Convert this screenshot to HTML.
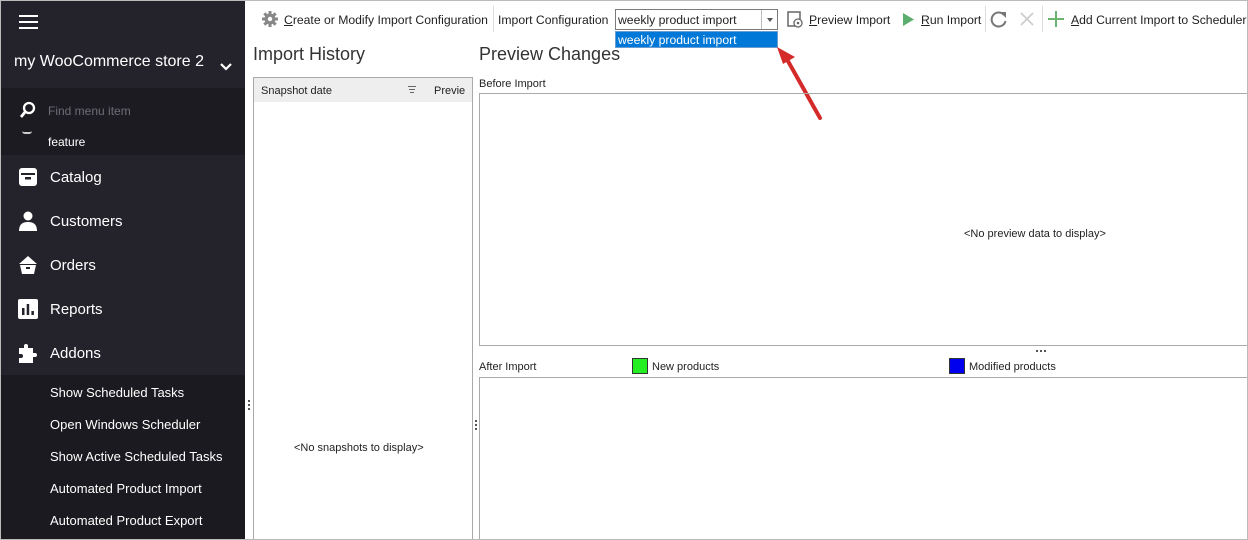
<!DOCTYPE html>
<html><head><meta charset="utf-8"><style>
*{box-sizing:border-box;margin:0;padding:0}
html{width:1248px;height:540px;overflow:hidden}
body{width:1248px;height:540px;overflow:hidden;background:#fff;font-family:"Liberation Sans",sans-serif;position:relative}
.a{position:absolute;white-space:nowrap}
.sb{position:absolute;left:0;top:0;width:245px;height:540px;background:#24232c}
.tb{font-size:12.2px;color:#222}
.u{text-decoration:underline}
.menu{color:#fff;font-size:15px}
.sub{color:#fff;font-size:13px}
.sm{font-size:11px;color:#222}
</style></head><body>
<div class="sb">
 <div class="a" style="left:0;top:88px;width:245px;height:67px;background:#1c1b21"></div>
 <div class="a" style="left:0;top:375px;width:245px;height:165px;background:#1b1a20"></div>
 <div class="a" style="left:19px;top:15px;width:19px;height:2px;background:#fff;box-shadow:0 6px 0 #fff,0 12px 0 #fff"></div>
 <div class="a" style="left:14px;top:53px;color:#fff;font-size:16px">my WooCommerce store 2</div>
 <svg class="a" style="left:219px;top:62px" width="14" height="10"><path d="M2 2l5 5 5-5" stroke="#fff" stroke-width="2.2" fill="none"/></svg>
 <svg class="a" style="left:19px;top:101px" width="18" height="18"><circle cx="10" cy="7" r="5" stroke="#fff" stroke-width="2.3" fill="none"/><path d="M6.5 10.5L2 16" stroke="#fff" stroke-width="2.8"/></svg>
 <div class="a" style="left:48px;top:104px;color:#6e6d75;font-size:12px">Find menu item</div>
 <div class="a" style="left:22px;top:131px;width:10px;height:3px;border-bottom:2px solid #ccc;border-radius:0 0 6px 6px"></div>
 <div class="a" style="left:48px;top:135px;color:#fff;font-size:12px">feature</div>
 <svg class="a" style="left:18px;top:167px" width="20" height="20"><rect x="1" y="1" width="18" height="18" rx="3" fill="#fff"/><rect x="3" y="6" width="14" height="2" fill="#24232c"/><rect x="7" y="10" width="6" height="2.5" fill="#24232c"/></svg>
 <div class="a menu" style="left:50px;top:169px">Catalog</div>
 <svg class="a" style="left:18px;top:211px" width="20" height="20"><circle cx="10" cy="5" r="4.5" fill="#fff"/><path d="M1 20c0-7 4-9 9-9s9 2 9 9z" fill="#fff"/></svg>
 <div class="a menu" style="left:50px;top:213px">Customers</div>
 <svg class="a" style="left:18px;top:255px" width="20" height="20"><path d="M10 1L1 9h18z" fill="#fff"/><path d="M2 10h16l-2 9H4z" fill="#fff"/><rect x="8" y="12" width="4" height="2" fill="#24232c"/></svg>
 <div class="a menu" style="left:50px;top:257px">Orders</div>
 <svg class="a" style="left:18px;top:299px" width="20" height="20"><rect x="0" y="0" width="20" height="20" rx="2" fill="#fff"/><rect x="4" y="9" width="2.5" height="7" fill="#24232c"/><rect x="8.7" y="5" width="2.5" height="11" fill="#24232c"/><rect x="13.4" y="12" width="2.5" height="4" fill="#24232c"/></svg>
 <div class="a menu" style="left:50px;top:301px">Reports</div>
 <svg class="a" style="left:18px;top:343px" width="20" height="20"><path d="M1 5h5V3a2 2 0 014 0v2h5v5h2a2 2 0 010 4h-2v6H1v-5h2a2 2 0 000-4H1z" fill="#fff"/></svg>
 <div class="a menu" style="left:50px;top:345px">Addons</div>
 <div class="a sub" style="left:50px;top:385px">Show Scheduled Tasks</div>
 <div class="a sub" style="left:50px;top:417px">Open Windows Scheduler</div>
 <div class="a sub" style="left:50px;top:449px">Show Active Scheduled Tasks</div>
 <div class="a sub" style="left:50px;top:481px">Automated Product Import</div>
 <div class="a sub" style="left:50px;top:513px">Automated Product Export</div>
</div>
<svg class="a" style="left:262px;top:11px" width="16" height="16"><circle cx="8" cy="8" r="5.5" fill="#888"/><g stroke="#888" stroke-width="3"><path d="M8 0v16M0 8h16M2.3 2.3l11.4 11.4M13.7 2.3L2.3 13.7"/></g><circle cx="8" cy="8" r="2.2" fill="#fff"/></svg>
<div class="a tb" style="left:284px;top:13px"><span class="u">C</span>reate or Modify Import Configuration</div>
<div class="a" style="left:493px;top:6px;width:1px;height:26px;background:#ddd"></div>
<div class="a tb" style="left:498px;top:13px">Import Configuration</div>
<div class="a" style="left:615px;top:9px;width:163px;height:21px;border:1px solid #7a7a7a;background:#fff"></div>
<div class="a tb" style="left:618px;top:13px">weekly product import</div>
<div class="a" style="left:761px;top:10px;width:1px;height:19px;background:#bbb"></div>
<div class="a" style="left:767px;top:18px;border:3.5px solid transparent;border-top:4px solid #555"></div>
<div class="a" style="left:615px;top:31px;width:163px;height:17px;background:#0078d7;border:1px solid #6a9cd0"></div>
<div class="a" style="left:618px;top:33px;color:#fff;font-size:12.2px">weekly product import</div>
<svg class="a" style="left:772px;top:44px" width="60" height="80"><path d="M48 74L12 10" stroke="#d42a2a" stroke-width="4" stroke-linecap="round"/><path d="M5 3l18 10-12 7z" fill="#d42a2a"/></svg>
<svg class="a" style="left:787px;top:11px" width="17" height="17"><rect x="1" y="1" width="12" height="14" fill="none" stroke="#666" stroke-width="1.5"/><circle cx="11" cy="12" r="4" fill="#fff" stroke="#666" stroke-width="1.3"/><circle cx="11" cy="12" r="1.3" fill="#666"/></svg>
<div class="a tb" style="left:809px;top:13px"><span class="u">P</span>review Import</div>
<svg class="a" style="left:902px;top:13px" width="12" height="13"><path d="M1 0l11 6.5L1 13z" fill="#5cae6e"/></svg>
<div class="a tb" style="left:921px;top:13px"><span class="u">R</span>un Import</div>
<div class="a" style="left:985px;top:6px;width:1px;height:26px;background:#ddd"></div>
<svg class="a" style="left:990px;top:10px" width="18" height="18"><path d="M14 5A7 7 0 1 0 15.5 11" stroke="#777" stroke-width="2" fill="none"/><path d="M10 2h6v6z" fill="#777"/></svg>
<svg class="a" style="left:1020px;top:12px" width="14" height="14"><path d="M1 1l12 12M13 1L1 13" stroke="#ccc" stroke-width="1.7"/></svg>
<div class="a" style="left:1042px;top:6px;width:1px;height:26px;background:#ddd"></div>
<svg class="a" style="left:1048px;top:11px" width="16" height="16"><path d="M8 0v16M0 8h16" stroke="#6ab46f" stroke-width="2"/></svg>
<div class="a tb" style="left:1071px;top:13px"><span class="u">A</span>dd Current Import to Scheduler</div>
<div class="a" style="left:253px;top:44px;font-size:18px;color:#333">Import History</div>
<div class="a" style="left:253px;top:77px;width:220px;height:470px;border:1px solid #aaa"></div>
<div class="a" style="left:254px;top:78px;width:218px;height:24px;background:#eee"></div>
<div class="a sm" style="left:261px;top:85px">Snapshot date</div>
<div class="a" style="left:408px;top:86px;width:8px;height:1px;background:#666"></div>
<div class="a" style="left:409px;top:89px;width:6px;height:1px;background:#666"></div>
<div class="a" style="left:410px;top:92px;width:4px;height:1px;background:#666"></div>
<div class="a sm" style="left:434px;top:85px">Previe</div>
<div class="a sm" style="left:294px;top:442px">&lt;No snapshots to display&gt;</div>
<div class="a" style="left:248px;top:400px;width:2px;height:10px;background:repeating-linear-gradient(#555 0 2px,transparent 2px 4px)"></div>
<div class="a" style="left:475px;top:420px;width:2px;height:10px;background:repeating-linear-gradient(#555 0 2px,transparent 2px 4px)"></div>
<div class="a" style="left:479px;top:44px;font-size:18px;color:#333">Preview Changes</div>
<div class="a sm" style="left:479px;top:78px">Before Import</div>
<div class="a" style="left:479px;top:93px;width:775px;height:253px;border:1px solid #aaa"></div>
<div class="a sm" style="left:964px;top:228px">&lt;No preview data to display&gt;</div>
<div class="a" style="left:1036px;top:350px;width:10px;height:2px;background:repeating-linear-gradient(90deg,#555 0 2px,transparent 2px 4px)"></div>
<div class="a sm" style="left:479px;top:361px">After Import</div>
<div class="a" style="left:632px;top:358px;width:16px;height:16px;background:#22ee22;border:1px solid #333"></div>
<div class="a sm" style="left:652px;top:361px">New products</div>
<div class="a" style="left:949px;top:358px;width:16px;height:16px;background:#0000ee;border:1px solid #333"></div>
<div class="a sm" style="left:969px;top:361px">Modified products</div>
<div class="a" style="left:479px;top:377px;width:775px;height:175px;border:1px solid #aaa"></div>
<div class="a" style="left:0;top:0;width:1248px;height:540px;border:1px solid #bbb;pointer-events:none"></div>
</body></html>
